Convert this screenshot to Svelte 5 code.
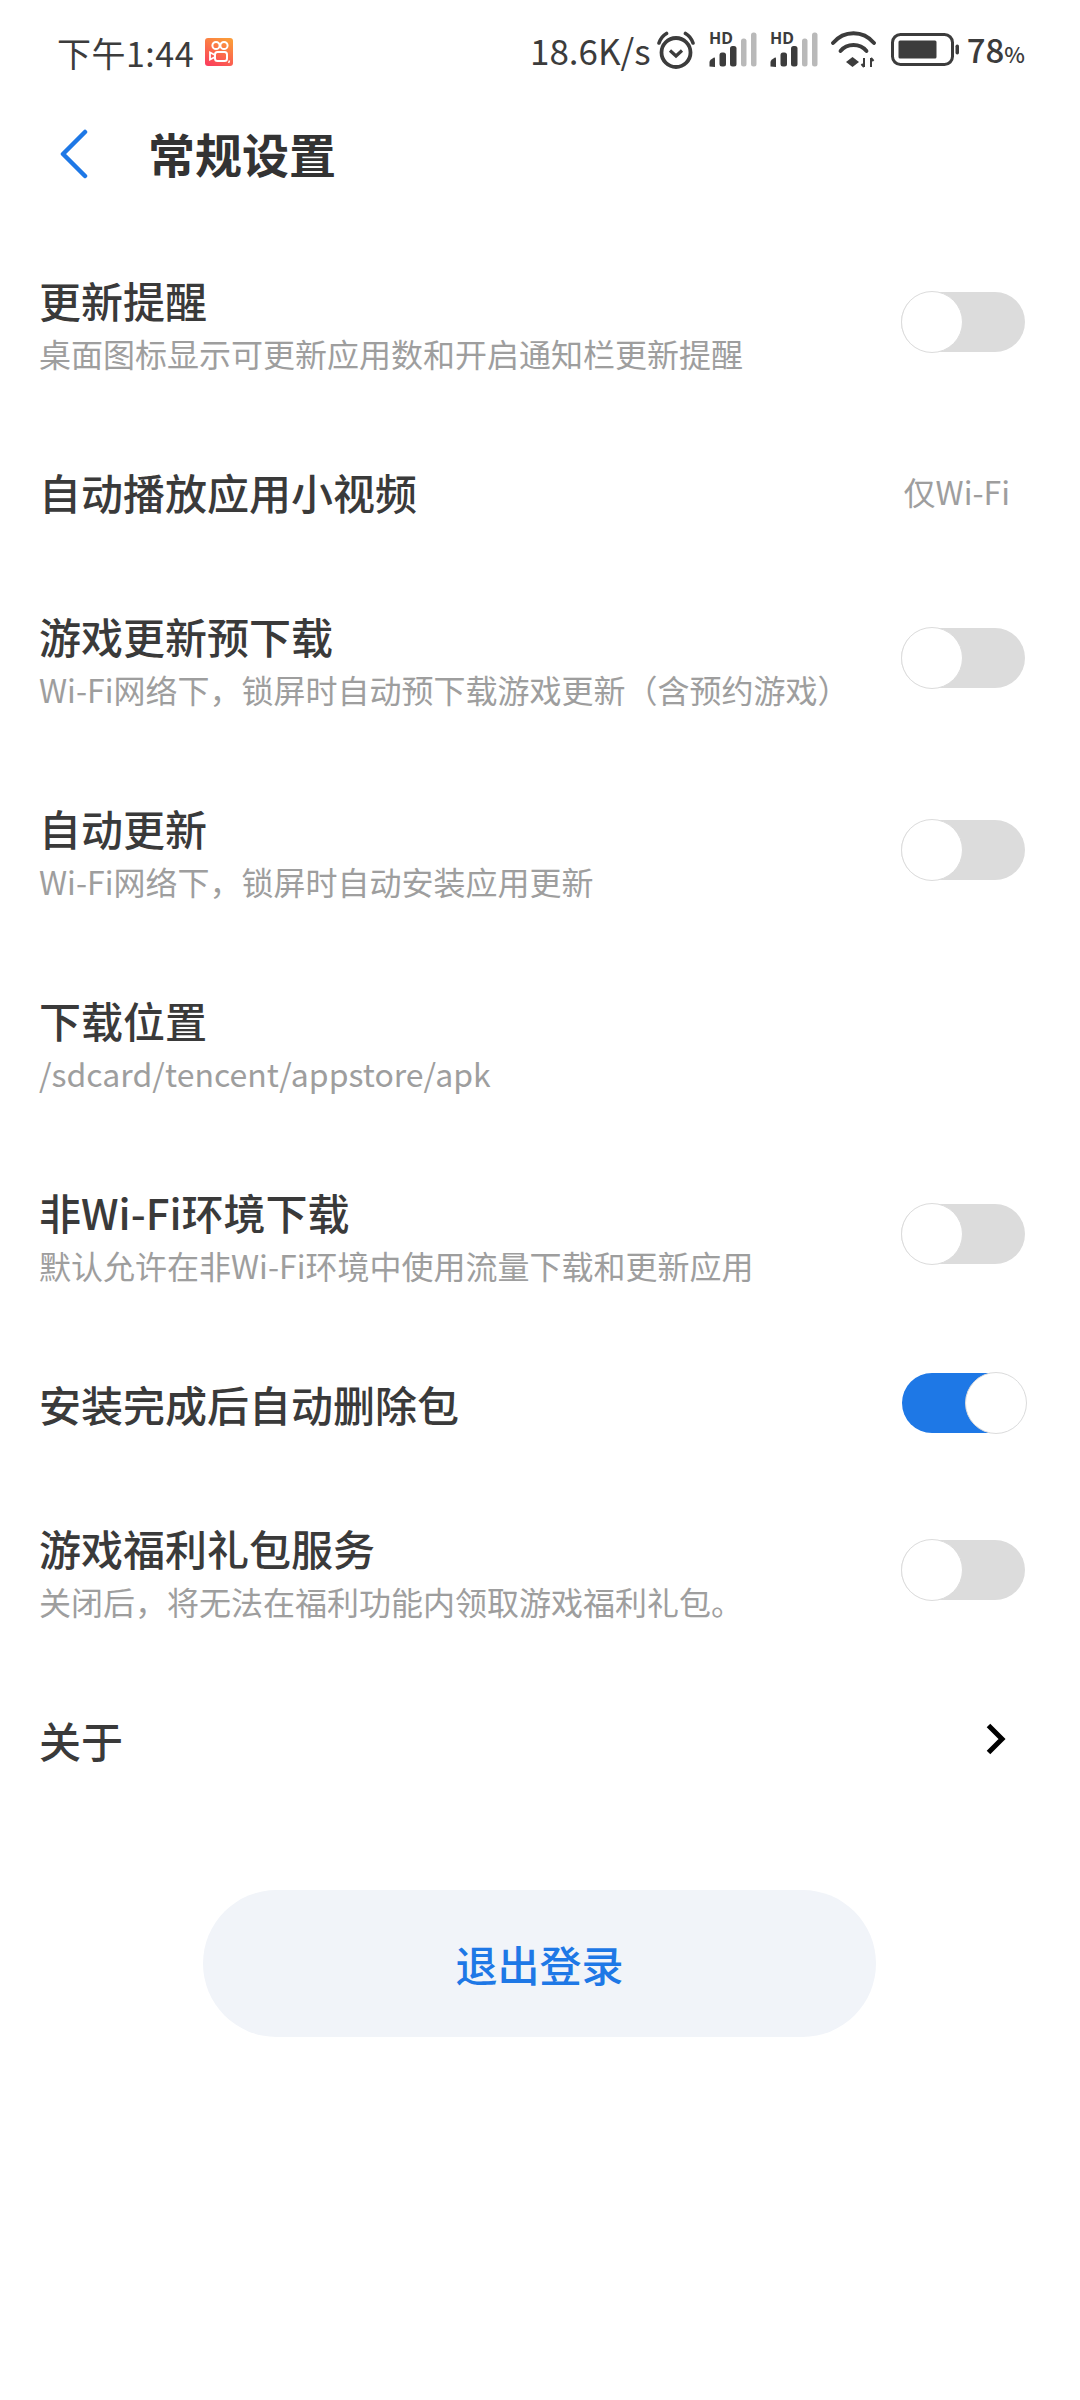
<script>
  const rows = [
    { t: '更新提醒', s: '桌面图标显示可更新应用数和开启通知栏更新提醒', k: 'off' },
    { t: '自动播放应用小视频', k: 'text', v: '仅Wi-Fi' },
    { t: '游戏更新预下载', s: 'Wi-Fi网络下，锁屏时自动预下载游戏更新（含预约游戏）', k: 'off' },
    { t: '自动更新', s: 'Wi-Fi网络下，锁屏时自动安装应用更新', k: 'off' },
    { t: '下载位置', s: '/sdcard/tencent/appstore/apk', k: 'none' },
    { t: '非Wi-Fi环境下载', s: '默认允许在非Wi-Fi环境中使用流量下载和更新应用', k: 'off' },
    { t: '安装完成后自动删除包', k: 'on' },
    { t: '游戏福利礼包服务', s: '关闭后，将无法在福利功能内领取游戏福利礼包。', k: 'off' },
    { t: '关于', k: 'arrow' }
  ];
</script>

{#snippet signal()}
  <svg class="signal" width="48" height="42" viewBox="0 -7 48 42">
    <text x="0" y="12" class="hd">HD</text>
    <path d="M0.500 34.500v-4.500q0-1.500 1.500-2.500l3-2q1-.5 1 1v8.500z" fill="#3c3c3c" />
    <rect x="10.500" y="20.500" width="6.500" height="14" rx="2.500" fill="#3c3c3c" />
    <rect x="21" y="14" width="6.500" height="20.500" rx="2.500" fill="#3c3c3c" />
    <rect x="32" y="6.500" width="5.500" height="28" rx="2.500" fill="#b9b9b9" />
    <rect x="42" y="0.500" width="5.500" height="34" rx="2.500" fill="#b9b9b9" />
  </svg>
{/snippet}

<div class="page">
  <div class="status">
    <div class="left">
      <span class="time">下午1:44</span>
      <svg class="ks" width="28" height="28" viewBox="0 0 28 28">
        <defs>
          <linearGradient id="ksg" x1="0.7" y1="0" x2="0.2" y2="1">
            <stop offset="0" stop-color="#fb9a3a" />
            <stop offset="1" stop-color="#fb3f5c" />
          </linearGradient>
        </defs>
        <rect width="28" height="28" rx="3" fill="url(#ksg)" />
        <circle cx="11" cy="7.500" r="3.600" fill="none" stroke="#fff" stroke-width="2" />
        <circle cx="19" cy="7.500" r="3.600" fill="none" stroke="#fff" stroke-width="2" />
        <rect x="10" y="14" width="12" height="9" rx="2.500" fill="none" stroke="#fff" stroke-width="2" />
        <path d="M10 17l-5-2.500v7l5-2.500" fill="none" stroke="#fff" stroke-width="1.800" />
        <path d="M24.500 22.500l-0.800 2.500" stroke="#fff" stroke-width="1.400" />
      </svg>
    </div>
    <div class="right">
      <span class="speed">18.6K/s</span>
      <svg class="alarm" width="38" height="42" viewBox="0 0 38 42">
        <circle cx="19" cy="24.500" r="14.500" fill="none" stroke="#3c3c3c" stroke-width="3.800" />
        <path d="M13 22.500l6 5.500 6-5.500" fill="none" stroke="#3c3c3c" stroke-width="3.200" />
        <path d="M2 15C3.500 10.500 6 7.500 9.500 5.500M36 15C34.500 10.500 32 7.500 28.500 5.500" fill="none" stroke="#3c3c3c" stroke-width="3.600" stroke-linecap="round" />
      </svg>
      {@render signal()}
      {@render signal()}
      <svg class="wifi" width="45" height="38" viewBox="0 0 45 38">
        <path d="M2 13C13 0 32 0 43 13" fill="none" stroke="#3c3c3c" stroke-width="3.800" stroke-linecap="round" />
        <path d="M9.500 21C16 13 29 13 35.500 21" fill="none" stroke="#3c3c3c" stroke-width="3.800" stroke-linecap="round" />
        <path d="M21.500 27L15 32L21.500 37L28 32Z" fill="#3c3c3c" />
        <path d="M33 28v9M30.500 34l2.500 3M40 37v-9M40 28l2.500 3" fill="none" stroke="#3c3c3c" stroke-width="2" />
      </svg>
      <svg class="batt" width="68" height="33" viewBox="0 0 68 33">
        <rect x="1.500" y="1.500" width="60" height="30" rx="8" fill="none" stroke="#3c3c3c" stroke-width="3" />
        <rect x="7.500" y="7.500" width="38" height="18" rx="1.500" fill="#3c3c3c" />
        <rect x="64.500" y="11.500" width="3.500" height="10" rx="1.700" fill="#3c3c3c" />
      </svg>
      <span class="pct">78<small>%</small></span>
    </div>
  </div>

  <header class="bar">
    <svg class="back" width="30" height="50" viewBox="0 0 30 50">
      <path d="M25 3L3 25L25 47" fill="none" stroke="#1e78e6" stroke-width="4.500" stroke-linecap="round" stroke-linejoin="round" />
    </svg>
    <h1>常规设置</h1>
  </header>

  <div class="list">
    {#each rows as r}
      <div class="row" class:tall={r.s}>
        <div class="copy">
          <div class="title">{r.t}</div>
          {#if r.s}<div class="sub">{r.s}</div>{/if}
        </div>
        {#if r.k === 'off' || r.k === 'on'}
          <div class="toggle" class:on={r.k === 'on'}><span class="knob"></span></div>
        {:else if r.k === 'text'}
          <span class="value">{r.v}</span>
        {:else if r.k === 'arrow'}
          <svg class="chev" width="20" height="32" viewBox="0 0 20 32">
            <path d="M2.500 2.500L16 16L2.500 29.500" fill="none" stroke="#000" stroke-width="5" />
          </svg>
        {/if}
      </div>
    {/each}
  </div>

  <button class="logout">退出登录</button>
</div>

<style>
  :global(body) {
    margin: 0;
    background: #fff;
  }
  .page {
    width: 1080px;
    height: 2400px;
    overflow: hidden;
    background: #fff;
    color: #333;
    font-family: "Noto Sans CJK SC", "Noto Sans", sans-serif;
  }
  .status {
    height: 100px;
    box-sizing: border-box;
    padding: 30px 55px 0 57px;
    display: flex;
    justify-content: space-between;
    align-items: flex-start;
    color: #3c3c3c;
  }
  .left, .right {
    display: flex;
    align-items: center;
    height: 44px;
  }
  .right {
    margin-top: -3px;
  }
  .time {
    font-size: 34px;
    letter-spacing: 0.5px;
  }
  .ks {
    margin-left: 11px;
  }
  .speed {
    font-size: 35px;
  }
  .alarm {
    margin: 0 1px 0 6px;
  }
  .signal {
    margin: -7px 0 0 13px;
  }
  .hd {
    font-size: 16px;
    font-weight: 700;
    fill: #3c3c3c;
    font-family: "Noto Sans", sans-serif;
  }
  .wifi {
    margin-left: 13px;
  }
  .batt {
    margin-left: 15px;
  }
  .pct {
    margin-left: 8px;
    font-size: 33px;
    font-weight: 500;
  }
  .pct small {
    font-size: 22px;
  }
  .bar {
    height: 108px;
    margin-bottom: 18px;
    display: flex;
    align-items: center;
    padding-left: 60px;
  }
  .back {
    flex: none;
  }
  h1 {
    margin: 0 0 3px 58px;
    font-size: 47px;
    font-weight: 700;
    color: #333;
  }
  .list {
    display: flex;
    flex-direction: column;
  }
  .row {
    height: 144px;
    padding: 0 55px 0 39px;
    display: flex;
    align-items: center;
    justify-content: space-between;
  }
  .row.tall {
    height: 192px;
  }
  .copy {
    padding-top: 3px;
  }
  .title {
    font-size: 42px;
    line-height: 56px;
    font-weight: 500;
    color: #3a3a3a;
  }
  .sub {
    font-size: 32px;
    line-height: 46px;
    margin-top: 2px;
    color: #9e9e9e;
  }
  .value {
    font-size: 32px;
    color: #9e9e9e;
    margin-right: 15px;
    padding-top: 1px;
  }
  .toggle {
    position: relative;
    box-sizing: border-box;
    width: 124px;
    height: 60px;
    border-radius: 30px;
    background: #dcdcdc;
  }
  .toggle.on {
    background: #1e78e6;
    margin: 2px -1px 0 0;
  }
  .knob {
    position: absolute;
    top: -1px;
    left: 0;
    width: 62px;
    height: 62px;
    box-sizing: border-box;
    border-radius: 50%;
    background: #fff;
    border: 1px solid #dcdcdc;
  }
  .toggle.on .knob {
    left: auto;
    right: -1px;
  }
  .chev {
    margin: 2px 19px 0 0;
  }
  .logout {
    display: block;
    width: 673px;
    height: 147px;
    margin: 80px 0 0 203px;
    border: 0;
    border-radius: 74px;
    background: #f1f4f9;
    color: #1e78e6;
    font-family: inherit;
    font-size: 42px;
    font-weight: 500;
  }
</style>
